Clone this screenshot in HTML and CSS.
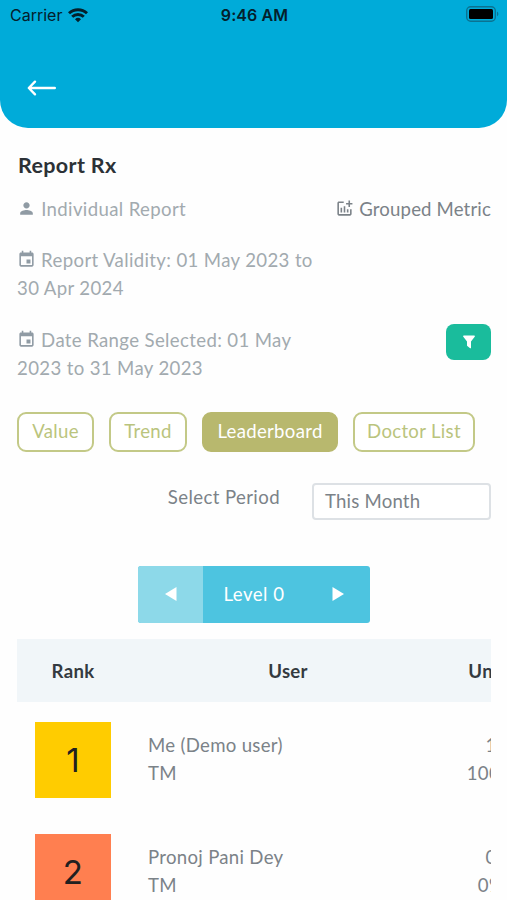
FILE: index.html
```html
<!DOCTYPE html>
<html lang="en">
<head>
    <meta charset="UTF-8">
    <meta name="viewport" content="width=device-width, initial-scale=1.0">
    <title>Report Rx</title>
    <link rel="stylesheet" href="styles.css">
</head>
<body>
    <header class="app-header">
        <div class="status-bar">
            <div class="carrier">
                <span>Carrier</span>
                <svg width="20" height="15" viewBox="0 0 20 15" fill="none" stroke="#04202b" stroke-width="2.9">
                    <path d="M1 5.3a13 13 0 0 1 18 0"/>
                    <path d="M4.2 8.8a8.3 8.3 0 0 1 11.6 0"/>
                    <path d="M7 11.2a4.4 4.4 0 0 1 6 0L10 14.3z" fill="#04202b" stroke="none"/>
                </svg>
            </div>
            <div class="clock">9:46 AM</div>
            <svg class="battery" width="33" height="16" viewBox="0 0 33 16">
                <rect x=".7" y=".7" width="28.6" height="14.6" rx="4" fill="none" stroke="#0b7291" stroke-width="1.4"/>
                <rect x="3" y="3" width="24" height="10" rx="1.5" fill="#000"/>
                <path d="M31 5.8c1.8.6 1.8 3.8 0 4.4z" fill="#0b7291"/>
            </svg>
        </div>
        <a href="#" class="back">
            <svg width="30" height="16" viewBox="0 0 30 16" fill="none" stroke="#fff" stroke-width="2.4" stroke-linecap="round" stroke-linejoin="round">
                <path d="M27.800 8H2M8 1.700L1.800 8L8 14.300"/>
            </svg>
        </a>
    </header>

    <main>
        <h1>Report Rx</h1>

        <div class="info-row">
            <p class="muted">
                <svg class="icon" viewBox="0 0 24 24"><path d="M12 12c2.2 0 4-1.8 4-4s-1.8-4-4-4-4 1.8-4 4 1.8 4 4 4zm0 2c-2.7 0-8 1.3-8 4v2h16v-2c0-2.7-5.3-4-8-4z"/></svg>
                <span>Individual Report</span>
            </p>
            <p class="grouped">
                <svg class="icon" viewBox="0 0 24 24"><path d="M22 5v2h-3v3h-2V7h-3V5h3V2h2v3h3zm-3 14H5V5h6V3H5c-1.1 0-2 .9-2 2v14c0 1.1.9 2 2 2h14c1.1 0 2-.9 2-2v-6h-2v6zm-4-6v4h2v-4h-2zm-4 4h2V9h-2v8zm-2 0v-6H7v6h2z"/></svg>
                <span>Grouped Metric</span>
            </p>
        </div>

        <p class="muted validity">
            <svg class="icon" viewBox="0 0 24 24"><path d="M17 12h-5v5h5v-5zM16 1v2H8V1H6v2H5c-1.1 0-2 .9-2 2v14c0 1.1.9 2 2 2h14c1.1 0 2-.9 2-2V5c0-1.1-.9-2-2-2h-1V1h-2zm3 18H5V8h14v11z"/></svg>
            Report Validity: 01 May 2023 to<br>30 Apr 2024
        </p>

        <div class="range-row">
            <p class="muted range">
                <svg class="icon" viewBox="0 0 24 24"><path d="M17 12h-5v5h5v-5zM16 1v2H8V1H6v2H5c-1.1 0-2 .9-2 2v14c0 1.1.9 2 2 2h14c1.1 0 2-.9 2-2V5c0-1.1-.9-2-2-2h-1V1h-2zm3 18H5V8h14v11z"/></svg>
                Date Range Selected: 01 May<br>2023 to 31 May 2023
            </p>
            <button class="filter" aria-label="Filter">
                <svg width="12" height="14" viewBox="0 0 12 14" fill="#fff"><path d="M.8.5h10.4c.7 0 .9.7.5 1.2L8 6.500v6.300c0 .5-.5.700-.9.400L4.300 11c-.2-.2-.3-.4-.3-.6V6.500L.3 1.700C-.1 1.200.1.500.8.500z"/></svg>
            </button>
        </div>

        <nav class="tabs">
            <button class="tab tab-value">Value</button>
            <button class="tab tab-trend">Trend</button>
            <button class="tab tab-leader active">Leaderboard</button>
            <button class="tab tab-doctor">Doctor List</button>
        </nav>

        <div class="period">
            <label>Select Period</label>
            <div class="select">This Month</div>
        </div>

        <div class="level">
            <button class="level-prev" aria-label="Previous level">
                <svg width="12" height="14" viewBox="0 0 12 14" fill="#fff"><path d="M11.5 0v14L0 7z"/></svg>
            </button>
            <span class="level-name">Level 0</span>
            <button class="level-next" aria-label="Next level">
                <svg width="12" height="14" viewBox="0 0 12 14" fill="#fff"><path d="M.5 0v14L12 7z"/></svg>
            </button>
        </div>

        <div class="table-wrap">
            <table>
                <thead>
                    <tr>
                        <th class="col-rank">Rank</th>
                        <th class="col-user">User</th>
                        <th class="col-units">Units</th>
                    </tr>
                </thead>
                <tbody>
                    <tr>
                        <td><div class="rank gold">1</div></td>
                        <td class="user">Me (Demo user)<br>TM</td>
                        <td class="units">1<br>100%</td>
                    </tr>
                    <tr>
                        <td><div class="rank coral">2</div></td>
                        <td class="user">Pronoj Pani Dey<br>TM</td>
                        <td class="units">0<br>0%</td>
                    </tr>
                </tbody>
            </table>
        </div>
    </main>
</body>
</html>
```
FILE: styles.css
```css
* {
    box-sizing: border-box;
}
body {
    margin: 0;
    height: 900px;
    overflow: hidden;
    background: #fefefe;
    color: #7b8288;
    font-family: Lato, "Liberation Sans", sans-serif;
    font-size: 18.6px;
    line-height: 28px;
    letter-spacing: 0.3px;
}
button {
    font: inherit;
    letter-spacing: inherit;
    border: 0;
    padding: 0;
    color: inherit;
}
p, h1 {
    margin: 0;
    white-space: nowrap;
}
.app-header {
    height: 128px;
    background: #00abd9;
    border-radius: 0 0 28px 28px;
}
.status-bar {
    display: grid;
    grid-template-columns: 1fr auto 1fr;
    align-items: center;
    height: 30px;
    padding: 0 8px 0 10px;
    font-family: Inter, sans-serif;
    font-size: 16px;
    letter-spacing: 0;
    color: #04202b;
}
.carrier {
    display: flex;
    align-items: center;
    gap: 6px;
}
.clock {
    font-weight: 600;
    letter-spacing: 0.1px;
}
.battery {
    justify-self: end;
    margin-top: -2px;
}
.back {
    display: flex;
    width: 30px;
    margin: 50px 0 0 27px;
}
main {
    padding: 23px 16px 0 17px;
}
h1 {
    padding-left: 1px;
    font-size: 21.5px;
    font-weight: 700;
    letter-spacing: 0.35px;
    color: #2c3136;
}
.info-row {
    display: flex;
    justify-content: space-between;
    margin-top: 16px;
}
.muted {
    color: #a2aaaf;
    letter-spacing: 0.36px;
}
.grouped {
    letter-spacing: 0.15px;
}
.icon {
    width: 19px;
    height: 19px;
    fill: currentColor;
    vertical-align: -2px;
}
.muted .icon {
    fill: #909ba4;
}
.validity {
    margin-top: 23px;
}
.range-row {
    display: flex;
    justify-content: space-between;
    margin-top: 24px;
}
.filter {
    display: flex;
    align-items: center;
    justify-content: center;
    width: 45px;
    height: 36px;
    margin-top: -2px;
    border-radius: 8px;
    background: #1abc9c;
}
.tabs {
    display: flex;
    gap: 15px;
    margin-top: 30px;
}
.tab {
    height: 40px;
    padding-bottom: 2px;
    border: 2px solid #c3c987;
    border-radius: 9px;
    background: #fff;
    color: #bac47d;
}
.tab-value {
    width: 77px;
}
.tab-trend {
    width: 78px;
}
.tab-leader {
    width: 136px;
}
.tab-doctor {
    width: 122px;
}
.tab.active {
    border-color: #b8b86e;
    background: #b8b86e;
    color: #fff;
}
.period {
    display: flex;
    justify-content: flex-end;
    gap: 32px;
    margin-top: 31px;
}
.period label {
    letter-spacing: 0.4px;
}
.select {
    width: 179px;
    height: 37px;
    padding: 2px 11px;
    border: 2px solid #dde1e5;
    border-radius: 4px;
    background: #fff;
    letter-spacing: 0.2px;
}
.level {
    display: flex;
    width: 232px;
    height: 57px;
    margin: 46px auto 0 121px;
    border-radius: 3px;
    overflow: hidden;
    background: #4dc4e0;
    color: #fff;
}
.level button,
.level-name {
    display: flex;
    align-items: center;
    justify-content: center;
    width: 65px;
    padding-bottom: 2px;
    background: none;
}
.level .level-prev {
    background: #8dd9e9;
}
.level .level-name {
    width: 102px;
    letter-spacing: 0.5px;
}
.table-wrap {
    margin-top: 16px;
    overflow: hidden;
}
table {
    width: 518px;
    table-layout: fixed;
    border-collapse: collapse;
}
th {
    height: 63px;
    padding: 0;
    background: #f1f6f9;
    color: #343a40;
    font-weight: 700;
}
td {
    height: 112px;
    padding: 20px 18px 16px;
    vertical-align: top;
}
.col-rank {
    width: 112px;
}
.col-user {
    width: 318px;
}
.col-units {
    width: 88px;
}
.rank {
    width: 76px;
    height: 76px;
    font-family: Inter, sans-serif;
    font-size: 33px;
    line-height: 77px;
    text-align: center;
    color: #212020;
}
.gold {
    background: #ffcc00;
}
.coral {
    background: #ff7f50;
}
td.user {
    padding: 29px 19px 0;
}
td.units {
    padding: 29px 0 0;
    text-align: center;
}
```
